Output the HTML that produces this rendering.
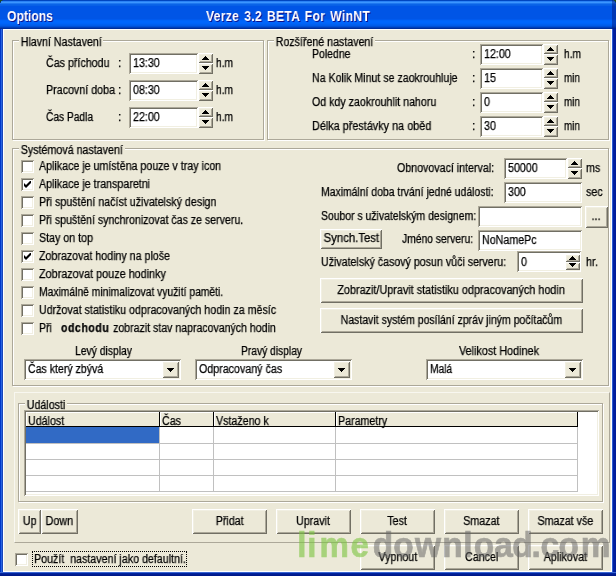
<!DOCTYPE html>
<html lang="cs"><head><meta charset="utf-8"><title>Options</title>
<style>
html,body{margin:0;padding:0}
body{width:616px;height:576px;overflow:hidden;background:linear-gradient(to right,#0037C8 0,#0037C8 1px,#2864E1 1px,#2864E1 2px,#1946B9 2px,#1946B9 3px,#0855DD 3px,#0855DD 611px,#2C5CD0 612px,#2C5CD0 613px,#0020A4 613px,#001C98 616px);position:relative;font-family:"Liberation Sans",sans-serif;font-size:12px;color:#000}
#title{position:absolute;left:0;top:0;width:616px;height:29px;
background:linear-gradient(to bottom,#0046C0 0.5px,#2A82F5 1.5px,#3C96FF 2.5px,#1E78F0 3.5px,#0A64E8 4.5px,#0860E6 5.5px,#0055E6 6.5px,#0055E6 7.5px,#0055E6 8.5px,#0055E6 9.5px,#0055E6 10.5px,#0055E6 11.5px,#0055E6 12.5px,#0055E6 13.5px,#0055E6 14.5px,#0055E6 15.5px,#0055E6 16.5px,#0055E6 17.5px,#0055E6 18.5px,#005AEE 19.5px,#0064F8 20.5px,#0066FC 21.5px,#0066FC 22.5px,#0064F8 23.5px,#0060F0 24.5px,#005CE8 25.5px,#0050D8 26.5px,#0040B8 27.5px,#002E98 28.5px);}
#title span{will-change:transform;position:absolute;top:7px;color:#fff;font-weight:bold;font-size:14px;line-height:18px;white-space:nowrap;text-shadow:1px 1px #0f1089;transform-origin:0 50%}
#title:after{content:'';position:absolute;right:0;top:0;width:4px;height:29px;background:rgba(0,20,120,.45)}
.cr{position:absolute;top:0;width:3px;height:3px}
#tl{left:7px;transform:scaleX(.87)}
#tc{left:206px;transform:scaleX(.87);word-spacing:1.6px;letter-spacing:.3px}
#bb{position:absolute;left:0;top:572px;width:616px;height:4px;background:linear-gradient(to bottom,#3A66D2 0,#3A66D2 1px,#0024A0 1px,#0024A0 2px,#001C90 2px,#001C90 3px,#001888 3px)}
#client{position:absolute;left:3px;top:29px;width:609px;height:543px;background:#ECE9D8;box-shadow:inset 1px 1px #fff, inset -1px -1px #fff}
#client>*{margin-left:-3px;margin-top:-29px}
.t{will-change:transform;-webkit-text-stroke:.25px #000;position:absolute;white-space:nowrap;line-height:16px;height:16px;font-size:12px;transform:scaleX(0.89);transform-origin:0 50%}
.t b{font-weight:bold}
.gl{background:#ECE9D8;padding:0 2px}
.grp{position:absolute;border:1px solid #ACA899;box-shadow:1px 1px #fff, inset 1px 1px #fff}
.pnl{position:absolute;border:1px solid;border-color:#F8F7F0 #ACA899 #ACA899 #F8F7F0}
.ed{position:absolute;padding:2px;background:
 linear-gradient(#ACA899,#ACA899) 0 0/100% 1px no-repeat,
 linear-gradient(#ACA899,#ACA899) 0 0/1px 100% no-repeat,
 linear-gradient(#FFFFFF,#FFFFFF) 100% 0/1px 100% no-repeat,
 linear-gradient(#FFFFFF,#FFFFFF) 0 100%/100% 1px no-repeat,
 linear-gradient(#716F64,#716F64) 1px 1px/calc(100% - 2px) 1px no-repeat,
 linear-gradient(#716F64,#716F64) 1px 1px/1px calc(100% - 2px) no-repeat,
 linear-gradient(#F1EFE2,#F1EFE2) calc(100% - 1px) 1px/1px calc(100% - 2px) no-repeat,
 linear-gradient(#F1EFE2,#F1EFE2) 1px calc(100% - 1px)/calc(100% - 2px) 1px no-repeat,
 #fff}
.btn{position:absolute;padding:2px;text-align:center;background:
 linear-gradient(#FFFFFF,#FFFFFF) 0 0/100% 1px no-repeat,
 linear-gradient(#FFFFFF,#FFFFFF) 0 0/1px 100% no-repeat,
 linear-gradient(#716F64,#716F64) 100% 0/1px 100% no-repeat,
 linear-gradient(#716F64,#716F64) 0 100%/100% 1px no-repeat,
 linear-gradient(#F1EFE2,#F1EFE2) 1px 1px/calc(100% - 2px) 1px no-repeat,
 linear-gradient(#F1EFE2,#F1EFE2) 1px 1px/1px calc(100% - 2px) no-repeat,
 linear-gradient(#ACA899,#ACA899) calc(100% - 1px) 1px/1px calc(100% - 2px) no-repeat,
 linear-gradient(#ACA899,#ACA899) 1px calc(100% - 1px)/calc(100% - 2px) 1px no-repeat,
 #ECE9D8}
.bt{will-change:transform;-webkit-text-stroke:.25px #000;display:inline-block;white-space:nowrap;font-size:12px;transform:scaleX(0.89);transform-origin:50% 50%}
.ar{position:absolute;left:4px;shape-rendering:crispEdges}
.cb{position:absolute;width:9px;height:9px;padding:2px;background:
 linear-gradient(#ACA899,#ACA899) 0 0/100% 1px no-repeat,
 linear-gradient(#ACA899,#ACA899) 0 0/1px 100% no-repeat,
 linear-gradient(#FFFFFF,#FFFFFF) 100% 0/1px 100% no-repeat,
 linear-gradient(#FFFFFF,#FFFFFF) 0 100%/100% 1px no-repeat,
 linear-gradient(#716F64,#716F64) 1px 1px/calc(100% - 2px) 1px no-repeat,
 linear-gradient(#716F64,#716F64) 1px 1px/1px calc(100% - 2px) no-repeat,
 linear-gradient(#F1EFE2,#F1EFE2) calc(100% - 1px) 1px/1px calc(100% - 2px) no-repeat,
 linear-gradient(#F1EFE2,#F1EFE2) 1px calc(100% - 1px)/calc(100% - 2px) 1px no-repeat,
 #fff}
.cb .ck{position:absolute;left:3px;top:3px}
#grid{overflow:hidden}
#grid>*{position:absolute}
.hd{top:2px;height:15px;background:#ECE9D8;box-shadow:inset -1px -1px #000, inset 1px 1px #fff}
#sel{left:2px;top:17px;width:133px;height:16px;background:#316AC5}
.hl{left:2px;width:552px;height:1px;background:#C0C0C0}
.vl{top:17px;width:1px;height:65px;background:#C0C0C0}
#focus{position:absolute;border:1px dotted #000}
#wm{position:absolute;left:0;top:525px;font-size:36px;font-weight:bold;font-family:"Liberation Sans",sans-serif}
#wm .g{fill:#7BC43F;stroke:#7BC43F;stroke-width:.7px;opacity:.6}
#wm .d{fill:#646464;stroke:#646464;stroke-width:.7px;opacity:.52}
</style></head>
<body>
<div id="title"><span id="tl">Options</span><span id="tc">Verze 3.2 BETA For WinNT</span></div>
<div id="bb"></div>
<svg class="cr" style="left:0" viewBox="0 0 3 3" shape-rendering="crispEdges"><path d="M0 0h3v1h-2v1h-1z" fill="#1C4A2A"/><path d="M2 0h1v1h-1zM0 2h1v1h-1z" fill="#0C3C90"/></svg>
<svg class="cr" style="left:613px" viewBox="0 0 3 3" shape-rendering="crispEdges"><path d="M0 0h3v2h-1v-1h-2z" fill="#1C4A2A"/><path d="M0 0h1v1h-1zM2 2h1v1h-1z" fill="#0C3C90"/></svg>
<div id="client">
<div class="grp" style="left:12px;top:40px;width:250px;height:98px"></div>
<span class="t gl" style="left:19px;top:34px;transform:scaleX(0.8863);">Hlavní Nastavení</span>
<span class="t " style="left:45.5px;top:55px;transform:scaleX(0.8897);">Čas příchodu</span>
<span class="t " style="left:118px;top:55px;">:</span>
<div class="ed" style="left:129px;top:53px;width:65px;height:17px"><span class="t" style="left:4px;top:2px">13:30</span></div>
<div class="btn sp" style="left:198px;top:53px;width:11px;height:6px"><svg class="ar" width="7" height="4" viewBox="0 0 7 4" style="top:3px"><path d="M3 0h1v1h1v1h1v1h1v1h-7v-1h1v-1h1v-1h1z" fill="#000"/></svg></div>
<div class="btn sp" style="left:198px;top:63px;width:11px;height:7px"><svg class="ar" width="7" height="4" viewBox="0 0 7 4" style="top:3px"><path d="M0 0h7v1h-1v1h-1v1h-1v1h-1v-1h-1v-1h-1v-1h-1z" fill="#000"/></svg></div>
<span class="t " style="left:216px;top:55px;transform:scaleX(0.8493);">h.m</span>
<span class="t " style="left:45.5px;top:82px;transform:scaleX(0.8916);">Pracovní doba</span>
<span class="t " style="left:118px;top:82px;">:</span>
<div class="ed" style="left:129px;top:80px;width:65px;height:17px"><span class="t" style="left:4px;top:2px">08:30</span></div>
<div class="btn sp" style="left:198px;top:80px;width:11px;height:6px"><svg class="ar" width="7" height="4" viewBox="0 0 7 4" style="top:3px"><path d="M3 0h1v1h1v1h1v1h1v1h-7v-1h1v-1h1v-1h1z" fill="#000"/></svg></div>
<div class="btn sp" style="left:198px;top:90px;width:11px;height:7px"><svg class="ar" width="7" height="4" viewBox="0 0 7 4" style="top:3px"><path d="M0 0h7v1h-1v1h-1v1h-1v1h-1v-1h-1v-1h-1v-1h-1z" fill="#000"/></svg></div>
<span class="t " style="left:216px;top:82px;transform:scaleX(0.8493);">h.m</span>
<span class="t " style="left:45.5px;top:109px;transform:scaleX(0.8488);">Čas Padla</span>
<span class="t " style="left:118px;top:109px;">:</span>
<div class="ed" style="left:129px;top:107px;width:65px;height:17px"><span class="t" style="left:4px;top:2px">22:00</span></div>
<div class="btn sp" style="left:198px;top:107px;width:11px;height:6px"><svg class="ar" width="7" height="4" viewBox="0 0 7 4" style="top:3px"><path d="M3 0h1v1h1v1h1v1h1v1h-7v-1h1v-1h1v-1h1z" fill="#000"/></svg></div>
<div class="btn sp" style="left:198px;top:117px;width:11px;height:7px"><svg class="ar" width="7" height="4" viewBox="0 0 7 4" style="top:3px"><path d="M0 0h7v1h-1v1h-1v1h-1v1h-1v-1h-1v-1h-1v-1h-1z" fill="#000"/></svg></div>
<span class="t " style="left:216px;top:109px;transform:scaleX(0.8493);">h.m</span>
<div class="grp" style="left:267px;top:40px;width:340px;height:98px"></div>
<span class="t gl" style="left:274px;top:34px;transform:scaleX(0.8859);">Rozšířené nastavení</span>
<span class="t " style="left:312px;top:46px;transform:scaleX(0.8741);">Poledne</span>
<span class="t " style="left:472px;top:46px;">:</span>
<div class="ed" style="left:480px;top:44px;width:59px;height:17px"><span class="t" style="left:4px;top:2px">12:00</span></div>
<div class="btn sp" style="left:543px;top:44px;width:11px;height:6px"><svg class="ar" width="7" height="4" viewBox="0 0 7 4" style="top:3px"><path d="M3 0h1v1h1v1h1v1h1v1h-7v-1h1v-1h1v-1h1z" fill="#000"/></svg></div>
<div class="btn sp" style="left:543px;top:54px;width:11px;height:7px"><svg class="ar" width="7" height="4" viewBox="0 0 7 4" style="top:3px"><path d="M0 0h7v1h-1v1h-1v1h-1v1h-1v-1h-1v-1h-1v-1h-1z" fill="#000"/></svg></div>
<span class="t " style="left:564px;top:46px;transform:scaleX(0.8493);">h.m</span>
<span class="t " style="left:312px;top:70px;transform:scaleX(0.8832);">Na Kolik Minut se zaokrouhluje</span>
<span class="t " style="left:472px;top:70px;">:</span>
<div class="ed" style="left:480px;top:68px;width:59px;height:17px"><span class="t" style="left:4px;top:2px">15</span></div>
<div class="btn sp" style="left:543px;top:68px;width:11px;height:6px"><svg class="ar" width="7" height="4" viewBox="0 0 7 4" style="top:3px"><path d="M3 0h1v1h1v1h1v1h1v1h-7v-1h1v-1h1v-1h1z" fill="#000"/></svg></div>
<div class="btn sp" style="left:543px;top:78px;width:11px;height:7px"><svg class="ar" width="7" height="4" viewBox="0 0 7 4" style="top:3px"><path d="M0 0h7v1h-1v1h-1v1h-1v1h-1v-1h-1v-1h-1v-1h-1z" fill="#000"/></svg></div>
<span class="t " style="left:564px;top:70px;transform:scaleX(0.8168);">min</span>
<span class="t " style="left:312px;top:94px;transform:scaleX(0.8869);">Od kdy zaokrouhlit nahoru</span>
<span class="t " style="left:472px;top:94px;">:</span>
<div class="ed" style="left:480px;top:92px;width:59px;height:17px"><span class="t" style="left:4px;top:2px">0</span></div>
<div class="btn sp" style="left:543px;top:92px;width:11px;height:6px"><svg class="ar" width="7" height="4" viewBox="0 0 7 4" style="top:3px"><path d="M3 0h1v1h1v1h1v1h1v1h-7v-1h1v-1h1v-1h1z" fill="#000"/></svg></div>
<div class="btn sp" style="left:543px;top:102px;width:11px;height:7px"><svg class="ar" width="7" height="4" viewBox="0 0 7 4" style="top:3px"><path d="M0 0h7v1h-1v1h-1v1h-1v1h-1v-1h-1v-1h-1v-1h-1z" fill="#000"/></svg></div>
<span class="t " style="left:564px;top:94px;transform:scaleX(0.8168);">min</span>
<span class="t " style="left:312px;top:118px;transform:scaleX(0.9029);">Délka přestávky na oběd</span>
<span class="t " style="left:472px;top:118px;">:</span>
<div class="ed" style="left:480px;top:116px;width:59px;height:17px"><span class="t" style="left:4px;top:2px">30</span></div>
<div class="btn sp" style="left:543px;top:116px;width:11px;height:6px"><svg class="ar" width="7" height="4" viewBox="0 0 7 4" style="top:3px"><path d="M3 0h1v1h1v1h1v1h1v1h-7v-1h1v-1h1v-1h1z" fill="#000"/></svg></div>
<div class="btn sp" style="left:543px;top:126px;width:11px;height:7px"><svg class="ar" width="7" height="4" viewBox="0 0 7 4" style="top:3px"><path d="M0 0h7v1h-1v1h-1v1h-1v1h-1v-1h-1v-1h-1v-1h-1z" fill="#000"/></svg></div>
<span class="t " style="left:564px;top:118px;transform:scaleX(0.8168);">min</span>
<div class="grp" style="left:12px;top:148px;width:595px;height:236px"></div>
<span class="t gl" style="left:19px;top:142px;">Systémová nastavení</span>
<div class="cb" style="left:21px;top:160px"></div>
<span class="t " style="left:39px;top:158px;transform:scaleX(0.8892);">Aplikace je umístěna pouze v tray icon</span>
<div class="cb" style="left:21px;top:178px"><svg class="ck" width="7" height="7" viewBox="0 0 7 7"><path d="M0 2v3l2 2l5-5v-3l-5 5z" fill="#000"/></svg></div>
<span class="t " style="left:39px;top:176px;">Aplikace je transparetni</span>
<div class="cb" style="left:21px;top:196px"></div>
<span class="t " style="left:39px;top:194px;transform:scaleX(0.8895);">Při spuštění načíst uživatelský design</span>
<div class="cb" style="left:21px;top:214px"></div>
<span class="t " style="left:39px;top:212px;transform:scaleX(0.8823);">Při spuštění synchronizovat čas ze serveru.</span>
<div class="cb" style="left:21px;top:232px"></div>
<span class="t " style="left:39px;top:230px;">Stay on top</span>
<div class="cb" style="left:21px;top:250px"><svg class="ck" width="7" height="7" viewBox="0 0 7 7"><path d="M0 2v3l2 2l5-5v-3l-5 5z" fill="#000"/></svg></div>
<span class="t " style="left:39px;top:248px;transform:scaleX(0.8885);">Zobrazovat hodiny na ploše</span>
<div class="cb" style="left:21px;top:268px"></div>
<span class="t " style="left:39px;top:266px;transform:scaleX(0.9015);">Zobrazovat pouze hodinky</span>
<div class="cb" style="left:21px;top:286px"></div>
<span class="t " style="left:39px;top:284px;transform:scaleX(0.8604);">Maximálně minimalizovat využití paměti.</span>
<div class="cb" style="left:21px;top:304px"></div>
<span class="t " style="left:39px;top:302px;transform:scaleX(0.8887);">Udržovat statistiku odpracovaných hodin za měsíc</span>
<div class="cb" style="left:21px;top:322px"></div>
<span class="t " style="left:39px;top:320px;transform:scaleX(0.8800);">Při <b style="margin:0 1px 0 7px;letter-spacing:.6px">odchodu</b> zobrazit stav napracovaných hodin</span>
<span class="t " style="left:397px;top:160px;transform:scaleX(0.8876);">Obnovovací interval:</span>
<div class="ed" style="left:504px;top:158px;width:59px;height:17px"><span class="t" style="left:4px;top:2px">50000</span></div>
<div class="btn sp" style="left:567px;top:158px;width:11px;height:6px"><svg class="ar" width="7" height="4" viewBox="0 0 7 4" style="top:3px"><path d="M3 0h1v1h1v1h1v1h1v1h-7v-1h1v-1h1v-1h1z" fill="#000"/></svg></div>
<div class="btn sp" style="left:567px;top:168px;width:11px;height:7px"><svg class="ar" width="7" height="4" viewBox="0 0 7 4" style="top:3px"><path d="M0 0h7v1h-1v1h-1v1h-1v1h-1v-1h-1v-1h-1v-1h-1z" fill="#000"/></svg></div>
<span class="t " style="left:586px;top:160px;">ms</span>
<span class="t " style="left:321px;top:184px;transform:scaleX(0.8680);">Maximální doba trvání jedné události:</span>
<div class="ed" style="left:504px;top:182px;width:74px;height:17px"><span class="t" style="left:4px;top:2px">300</span></div>
<span class="t " style="left:586px;top:184px;">sec</span>
<span class="t " style="left:321px;top:208px;transform:scaleX(0.8677);">Soubor s uživatelským designem:</span>
<div class="ed" style="left:478px;top:206px;width:100px;height:17px"><span class="t" style="left:4px;top:2px"></span></div>
<div class="btn" style="left:585px;top:206px;width:19px;height:18px;line-height:17px"><span class="bt" style="">...</span></div>
<div class="btn" style="left:320px;top:229px;width:58px;height:16px;line-height:15px"><span class="bt" style="transform:scaleX(0.9454);">Synch.Test</span></div>
<span class="t " style="left:402px;top:231px;transform:scaleX(0.8597);">Jméno serveru:</span>
<div class="ed" style="left:478px;top:230px;width:100px;height:17px"><span class="t" style="left:4px;top:2px">NoNamePc</span></div>
<span class="t " style="left:321px;top:254px;transform:scaleX(0.8867);">Uživatelský časový posun vůči serveru:</span>
<div class="ed" style="left:517px;top:251px;width:60px;height:17px"><span class="t" style="left:4px;top:3px">0</span></div>
<div class="btn sp" style="left:565px;top:254px;width:11px;height:4px"><svg class="ar" width="7" height="4" viewBox="0 0 7 4" style="top:2px"><path d="M3 0h1v1h1v1h1v1h1v1h-7v-1h1v-1h1v-1h1z" fill="#000"/></svg></div>
<div class="btn sp" style="left:565px;top:262px;width:11px;height:4px"><svg class="ar" width="7" height="4" viewBox="0 0 7 4" style="top:1px"><path d="M0 0h7v1h-1v1h-1v1h-1v1h-1v-1h-1v-1h-1v-1h-1z" fill="#000"/></svg></div>
<span class="t " style="left:586px;top:254px;">hr.</span>
<div class="btn" style="left:320px;top:278px;width:259px;height:21px;line-height:20px"><span class="bt" style="transform:scaleX(0.9023);">Zobrazit/Upravit statistiku odpracovaných hodin</span></div>
<div class="btn" style="left:320px;top:308px;width:259px;height:21px;line-height:20px"><span class="bt" style="transform:scaleX(0.8763);">Nastavit systém posílání zpráv jiným počítačům</span></div>
<span class="t " style="left:75px;top:343px;transform:scaleX(0.8630);">Levý display</span>
<div class="ed" style="left:24px;top:359px;width:153px;height:17px"><span class="t" style="left:4px;top:2px;transform:scaleX(0.8798);">Čas který zbývá</span><div class="btn cbb" style="right:2px;top:2px;width:13px;height:13px"><svg class="ar" style="left:5px;top:7px" width="7" height="4" viewBox="0 0 7 4"><path d="M0 0h7v1h-1v1h-1v1h-1v1h-1v-1h-1v-1h-1v-1h-1z" fill="#000"/></svg></div></div>
<span class="t " style="left:241px;top:343px;transform:scaleX(0.8546);">Pravý display</span>
<div class="ed" style="left:195px;top:359px;width:153px;height:17px"><span class="t" style="left:4px;top:2px;">Odpracovaný čas</span><div class="btn cbb" style="right:2px;top:2px;width:13px;height:13px"><svg class="ar" style="left:5px;top:7px" width="7" height="4" viewBox="0 0 7 4"><path d="M0 0h7v1h-1v1h-1v1h-1v1h-1v-1h-1v-1h-1v-1h-1z" fill="#000"/></svg></div></div>
<span class="t " style="left:459px;top:343px;transform:scaleX(0.9017);">Velikost Hodinek</span>
<div class="ed" style="left:426px;top:359px;width:153px;height:17px"><span class="t" style="left:4px;top:2px;transform:scaleX(0.8533);">Malá</span><div class="btn cbb" style="right:2px;top:2px;width:13px;height:13px"><svg class="ar" style="left:5px;top:7px" width="7" height="4" viewBox="0 0 7 4"><path d="M0 0h7v1h-1v1h-1v1h-1v1h-1v-1h-1v-1h-1v-1h-1z" fill="#000"/></svg></div></div>
<div class="pnl" style="left:14px;top:392px;width:594px;height:149px"></div>
<div class="grp" style="left:18px;top:403px;width:583px;height:97px"></div>
<span class="t gl" style="left:25px;top:397px;">Události</span>
<div class="ed" id="grid" style="left:24px;top:410px;width:571px;height:82px"><div class="hd" style="left:2px;width:134px"><span class="t" style="left:2px;top:1px">Událost</span></div><div class="hd" style="left:136px;width:54px"><span class="t" style="left:2px;top:1px">Čas</span></div><div class="hd" style="left:190px;width:122px"><span class="t" style="left:2px;top:1px">Vstaženo k</span></div><div class="hd" style="left:312px;width:242px"><span class="t" style="left:2px;top:1px">Parametry</span></div><div id="sel"></div><div class="hl" style="top:33px"></div><div class="hl" style="top:49px"></div><div class="hl" style="top:65px"></div><div class="hl" style="top:81px"></div><div class="vl" style="left:135px"></div><div class="vl" style="left:189px"></div><div class="vl" style="left:311px"></div><div class="vl" style="left:553px"></div></div>
<div class="btn" style="left:18px;top:509px;width:19px;height:21px;line-height:20px"><span class="bt" style="transform:scaleX(0.8929);">Up</span></div>
<div class="btn" style="left:41px;top:509px;width:33px;height:21px;line-height:20px"><span class="bt" style="transform:scaleX(0.9026);">Down</span></div>
<div class="btn" style="left:192px;top:509px;width:71px;height:21px;line-height:20px"><span class="bt" style="">Přidat</span></div>
<div class="btn" style="left:276px;top:509px;width:71px;height:21px;line-height:20px"><span class="bt" style="">Upravit</span></div>
<div class="btn" style="left:360px;top:509px;width:71px;height:21px;line-height:20px"><span class="bt" style="">Test</span></div>
<div class="btn" style="left:444px;top:509px;width:71px;height:21px;line-height:20px"><span class="bt" style="">Smazat</span></div>
<div class="btn" style="left:528px;top:509px;width:71px;height:21px;line-height:20px"><span class="bt" style="">Smazat vše</span></div>
<div class="btn" style="left:360px;top:545px;width:71px;height:21px;line-height:20px"><span class="bt" style="">Vypnout</span></div>
<div class="btn" style="left:444px;top:545px;width:71px;height:21px;line-height:20px"><span class="bt" style="">Cancel</span></div>
<div class="btn" style="left:528px;top:545px;width:71px;height:21px;line-height:20px"><span class="bt" style="">Aplikovat</span></div>
<div class="cb" style="left:15px;top:553px"></div>
<div id="focus" style="left:32px;top:551px;width:153px;height:14px"></div>
<span class="t " style="left:34px;top:551px;transform:scaleX(0.8894);">Použít&nbsp; nastavení jako defaultní.</span>
<svg id="wm" width="616" height="60" viewBox="0 0 616 60"><text class="g" transform="scale(0.92,1)" y="32.5" x="323.0 334.1 347.2 381.0">lime</text><text class="d" transform="scale(0.93,1)" y="32.5" x="400.8 422.8 446.2 475.5 498.0 509.4 531.4 550.7 571.4 581.1 600.6 624.5">download.com</text></svg>
</div>
</body></html>
